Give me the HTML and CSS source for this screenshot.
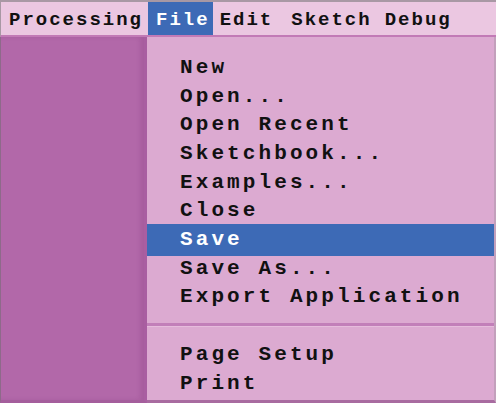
FILE: index.html
```html
<!DOCTYPE html>
<html>
<head>
<meta charset="utf-8">
<link rel="stylesheet" href="styles.css">
</head>
<body>
<div class="app">
  <div class="menubar">
    <span class="mb-item first">Processing</span>
    <span class="mb-item active">File</span>
    <span class="mb-item wide">Edit</span>
    <span class="mb-item mid">Sketch</span>
    <span class="mb-item">Debug</span>
  </div>
  <div class="main">
    <div class="sidebar"></div>
    <div class="menu">
      <div class="group">
        <div class="item">New</div>
        <div class="item">Open...</div>
        <div class="item">Open Recent</div>
        <div class="item">Sketchbook...</div>
        <div class="item">Examples...</div>
        <div class="item">Close</div>
        <div class="item selected">Save</div>
        <div class="item">Save As...</div>
        <div class="item">Export Application</div>
      </div>
      <div class="separator"></div>
      <div class="group second">
        <div class="item">Page Setup</div>
        <div class="item">Print</div>
      </div>
    </div>
  </div>
</div>
</body>
</html>
```
FILE: styles.css
```css
html, body {
  margin: 0;
  padding: 0;
  background: #dcaad1;
}
.app {
  width: 496px;
  height: 403px;
  display: flex;
  flex-direction: column;
  font-family: "Liberation Mono", "Courier New", monospace;
  font-weight: bold;
  color: #111;
  overflow: hidden;
}
.menubar {
  height: 33px;
  display: flex;
  align-items: stretch;
  background: #ebc7e1;
  border-top: 2px solid #a898a4;
  border-bottom: 2px solid #c27ab6;
  border-left: 1px solid #a898a4;
  font-size: 19px;
  letter-spacing: 2px;
  line-height: 36px;
}
.mb-item {
  padding: 0 3px 0 7px;
  white-space: pre;
}
.mb-item.wide {
  padding-right: 11px;
}
.mb-item.mid {
  padding-right: 6px;
}
.mb-item.first {
  padding-left: 8px;
  padding-right: 5px;
}
.mb-item.active {
  background: #3d6ab6;
  color: #fff;
  padding-left: 8px;
  padding-right: 3px;
}
.main {
  flex: 1;
  display: flex;
  min-height: 0;
}
.sidebar {
  width: 143px;
  background: #b268a9;
  border-left: 1px solid #8e6a8a;
  border-bottom: 3px solid #a45e9c;
  box-shadow: inset -4px 0 4px rgba(90, 20, 80, 0.12);
  border-right: 3px solid #a95ea1;
}
.menu {
  flex: 1;
  background: #dcaad1;
  padding-top: 17px;
  border-right: 2px solid #c3a0bc;
  border-bottom: 3px solid #a86ba0;
  font-size: 21px;
  letter-spacing: 3.1px;
  display: flex;
  flex-direction: column;
}
.item {
  height: 28.67px;
  line-height: 28.67px;
  padding-left: 33px;
  white-space: pre;
}
.item.selected {
  background: #3d6ab6;
  color: #fff;
  height: 31.5px;
  line-height: 31.5px;
  margin: -1.5px 0 -1.3px;
}
.separator {
  height: 3px;
  margin-top: 11px;
  background: #c27fb9;
  border-bottom: 1px solid #e6bcdc;
}
.group.second {
  margin-top: 14px;
}
```
